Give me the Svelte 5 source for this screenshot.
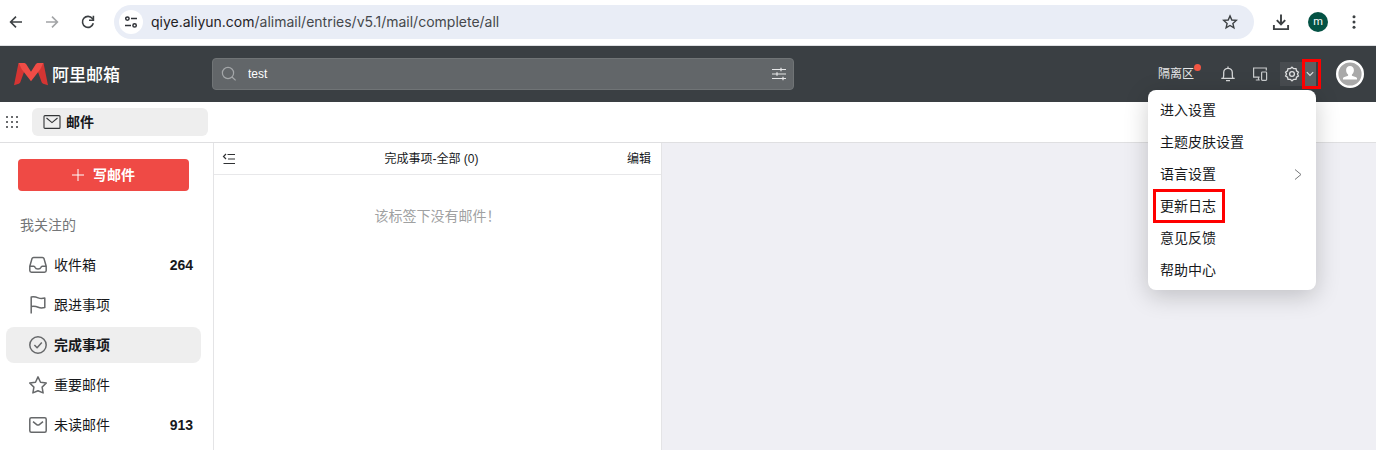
<script>
  let url = 'qiye.aliyun.com';
  let path = '/alimail/entries/v5.1/mail/complete/all';
  let query = 'test';
  let activeFolder = 'complete';
  let menuOpen = true;

  const folders = [
    { id: 'inbox', name: '收件箱', count: 264 },
    { id: 'follow', name: '跟进事项' },
    { id: 'complete', name: '完成事项' },
    { id: 'important', name: '重要邮件' },
    { id: 'unread', name: '未读邮件', count: 913 }
  ];

  const menu = [
    { name: '进入设置' },
    { name: '主题皮肤设置' },
    { name: '语言设置', more: true },
    { name: '更新日志', marked: true },
    { name: '意见反馈' },
    { name: '帮助中心' }
  ];
</script>

<div class="page">
  <div class="browser">
    <button class="nav-btn" aria-label="Back">
      <svg width="16" height="16" viewBox="0 0 16 16" fill="none" stroke="#3c4043" stroke-width="1.6"><path d="M14 8H3M8 2.6 2.6 8 8 13.4" /></svg>
    </button>
    <button class="nav-btn" aria-label="Forward" disabled>
      <svg width="16" height="16" viewBox="0 0 16 16" fill="none" stroke="#a2a4a6" stroke-width="1.6"><path d="M2 8h11M8 2.6 13.4 8 8 13.4" /></svg>
    </button>
    <button class="nav-btn" aria-label="Reload">
      <svg width="16" height="16" viewBox="0 0 16 16" fill="none" stroke="#3c4043" stroke-width="1.6"><path d="M13.3 9.300A5.500 5.500 0 1 1 12.400 4.600L13.600 5.800" /><path d="M13.400 1.800v4.400H9" /></svg>
    </button>
    <div class="address">
      <button class="site-info" aria-label="Site info">
        <svg width="14" height="14" viewBox="0 0 14 14" fill="none" stroke="#303338" stroke-width="1.5"><circle cx="3.4" cy="3.6" r="1.7" /><path d="M7 3.6h6M1 10.4h6" /><circle cx="10.6" cy="10.4" r="1.7" /></svg>
      </button>
      <span class="url">{url}<span class="path">{path}</span></span>
      <button class="nav-btn" aria-label="Bookmark">
        <svg width="16" height="16" viewBox="0 0 16 16" fill="none" stroke="#3c4043" stroke-width="1.4"><path d="m8 1.9 1.8 4.1 4.5.4-3.4 3 1 4.4L8 11.5l-3.9 2.3 1-4.4-3.4-3 4.500-.4z" /></svg>
      </button>
    </div>
    <button class="nav-btn" aria-label="Downloads">
      <svg width="18" height="18" viewBox="0 0 18 18" fill="none" stroke="#3c4043" stroke-width="1.9"><path d="M9 1.5v9.5M4.8 7.2 9 11.4l4.2-4.2M1.9 12v4.1h14.2V12" /></svg>
    </button>
    <button class="profile">m</button>
    <button class="nav-btn" aria-label="More">
      <svg width="16" height="16" viewBox="0 0 16 16" fill="#3c4043"><circle cx="8" cy="2.8" r="1.5" /><circle cx="8" cy="8" r="1.5" /><circle cx="8" cy="13.2" r="1.5" /></svg>
    </button>
  </div>

  <header>
    <a class="logo" href="/">
      <svg width="34" height="24" viewBox="0 0 34 24">
        <path fill="#d43533" d="M4.500 1 0 23.200l4.800-1.500c1.100-.4 1.600-1.200 1.900-2.400L10.200 9.500z" />
        <path fill="#d43533" d="M29.500 1 34 23.200l-4.800-1.500c-1.100-.4-1.600-1.200-1.900-2.400L23.800 9.500z" />
        <path fill="#f04c46" d="M4.500 1h5.300c1.100 0 2 .5 2.600 1.500L17 9.800l4.600-7.300c.6-1 1.500-1.500 2.600-1.500h5.300l-3.200 6.200L17 19.200 7.700 7.200z" />
      </svg>
      <span>阿里邮箱</span>
    </a>
    <div class="search">
      <svg width="16" height="16" viewBox="0 0 16 16" fill="none" stroke="#a4a7a9" stroke-width="1.2"><circle cx="7" cy="7" r="5.6" /><path d="m11 11 3.600 3.400" /></svg>
      <input type="text" aria-label="搜索" bind:value={query} />
      <button aria-label="高级搜索">
        <svg width="14" height="14" viewBox="0 0 14 14" fill="none" stroke="#e6e7e8" stroke-width="1.2"><path d="M0 2.5h14M0 7h14M0 11.500h14M9 .7v3.600M5 5.200v3.600M11 9.700v3.600" /></svg>
      </button>
    </div>
    <div class="tools">
      <a class="quarantine" href="/quarantine">隔离区<i class="dot"></i></a>
      <button class="bell" aria-label="通知">
        <svg width="16" height="16" viewBox="0 0 16 16" fill="none" stroke="#d4d6d7" stroke-width="1.3"><path d="M8 .6v1.700M1.300 12.400h13.400M3 12.400c.6-1 .7-2 .7-3.700V6.600a4.300 4.300 0 0 1 8.600 0v2.100c0 1.700.1 2.700.7 3.700M6 14.700h4" /></svg>
      </button>
      <button class="devices" aria-label="多端">
        <svg width="16" height="16" viewBox="0 0 16 16" fill="none" stroke="#c9cccd" stroke-width="1.200"><path d="M14.300 4.400V2H1.600v9.200h6M3.800 14h4M6.500 11.200V14" /><rect x="9.600" y="6" width="5" height="8.400" rx=".8" /></svg>
      </button>
      <div class="settings">
        <button class="gear" aria-label="设置">
          <svg width="16" height="16" viewBox="0 0 16 16" fill="none" stroke="#dfe0e1" stroke-width="1.300"><path d="m8 1.200 1.700 1.500 2.300-.1.500 2.200 1.900 1.300L13.500 8l.9 2-1.900 1.200-.5 2.200-2.300-.1L8 14.800l-1.700-1.500-2.300.1-.5-2.200L1.600 10l.9-2-.9-1.900 1.900-1.300.5-2.200 2.300.1z" /><circle cx="8" cy="8" r="2.400" /></svg>
        </button>
        <button class="caret" aria-label="更多设置" on:click={() => menuOpen = !menuOpen}>
          <svg width="8" height="6" viewBox="0 0 8 6" fill="none" stroke="#dfe0e1" stroke-width="1.100"><path d="m.8 1.200 3.200 3.200 3.200-3.200" /></svg>
        </button>
        {#if menuOpen}
          <ul class="menu">
            {#each menu as item}
              <li>
                <button>
                  <span class:marked={item.marked}>{item.name}</span>
                  {#if item.more}
                    <svg width="8" height="12" viewBox="0 0 8 12" fill="none" stroke="#77797b"><path d="m1 1.500 6 5-6 5" /></svg>
                  {/if}
                </button>
              </li>
            {/each}
          </ul>
        {/if}
      </div>
      <button class="avatar" aria-label="账号">
        <svg width="28" height="28" viewBox="0 0 28 28"><circle cx="14" cy="14" r="12.800" fill="#a9a9a9" stroke="#fff" stroke-width="2.400" /><path fill="#fff" d="M14 6c2.500 0 3.900 1.800 3.900 4.200 0 1.900-.8 3.300-2 4.200v1.300c1.700.6 4.400 1.100 5.100 2.300v1.500H7V18c.7-1.200 3.400-1.700 5.100-2.300v-1.300c-1.200-.9-2-2.300-2-4.200C10.100 7.800 11.500 6 14 6z" /></svg>
      </button>
    </div>
  </header>

  <nav class="tabs">
    <button class="apps" aria-label="应用">
      <svg width="14" height="14" viewBox="0 0 14 14" fill="#6a6c6e">
        {#each [0, 1, 2] as row}
          {#each [0, 1, 2] as col}
            <rect x={col * 5 + 1} y={row * 5 + 1} width="2" height="2" />
          {/each}
        {/each}
      </svg>
    </button>
    <button class="tab">
      <svg width="18" height="14" viewBox="0 0 18 14" fill="none" stroke="#333537" stroke-width="1.100"><rect x="1" y=".6" width="16" height="12.800" rx="1" /><path d="m3.500 3 5.500 4.600L14.500 3" /></svg>
      邮件
    </button>
  </nav>

  <main>
    <aside>
      <button class="compose">
        <svg width="12" height="12" viewBox="0 0 12 12" stroke="#fff" stroke-width="1"><path d="M6 0v12M0 6h12" /></svg>
        写邮件
      </button>
      <h2>我关注的</h2>
      <ul class="folders">
        {#each folders as folder}
          <li>
            <button class:active={activeFolder === folder.id} on:click={() => activeFolder = folder.id}>
              <svg width="18" height="18" viewBox="0 0 18 18" fill="none" stroke="#66686a" stroke-width="1.500" stroke-linejoin="round">
                {#if folder.id === 'inbox'}
                  <path d="M.8 10.200 3 2.600Q3.400 1.400 4.600 1.400h8.800q1.200 0 1.600 1.200l2.200 7.600v4.400q0 1.700-1.700 1.700H2.500Q.8 16.300.8 14.600zh4q.9 0 1.200 1 .6 1.700 3 1.700t3-1.700q.3-1 1.200-1h4" />
                {:else if folder.id === 'follow'}
                  <path d="M2.200 17.600V1c2.500-.5 4.600-.1 7 .9 2.200.9 4.200.8 6.600.2v9.400c-2.400.6-4.400.7-6.600-.2-2.400-1-4.500-1.200-7-.7" />
                {:else if folder.id === 'complete'}
                  <circle cx="9" cy="9" r="8.200" /><path d="m5.400 9 2.700 2.800 4.700-5.200" />
                {:else if folder.id === 'important'}
                  <path d="m9 .9 2.500 5.300 5.800.8-4.200 4.100 1 5.800L9 14.700l-5.100 2.200 1-5.800L.7 7l5.800-.8z" />
                {:else}
                  <rect x=".8" y="1.800" width="16.400" height="14.400" rx="1.500" /><path d="m4 5.700 4 3.100q1 .6 2 0l4-3.100" />
                {/if}
              </svg>
              <span>{folder.name}</span>
              {#if folder.count}<strong>{folder.count}</strong>{/if}
            </button>
          </li>
        {/each}
      </ul>
    </aside>

    <section class="list">
      <div class="list-head">
        <button aria-label="收起">
          <svg width="14" height="12" viewBox="0 0 14 12" fill="none" stroke="#303234" stroke-width="1.200"><path d="M5.500 1.500H13M6 6h7M1.500 10.500H13M4 1 1.500 3.500 4 6" /></svg>
        </button>
        <h1>完成事项-全部 (0)</h1>
        <button>编辑</button>
      </div>
      <p class="empty">该标签下没有邮件！</p>
    </section>
    <section class="detail"></section>
  </main>
</div>

<style>
  :global(body) {
    font-family: "Liberation Sans", "Noto Sans CJK SC", sans-serif;
    font-size: 14px;
    line-height: 20px;
    color: #17191c;
  }
  .page {
    display: flex;
    flex-direction: column;
    height: 100vh;
    overflow: hidden;
  }
  button {
    display: flex;
    align-items: center;
    padding: 0;
    border: none;
    background: none;
    color: inherit;
    font: inherit;
    cursor: pointer;
  }
  svg {
    display: block;
    flex-shrink: 0;
  }
  ul {
    list-style: none;
    margin: 0;
    padding: 0;
  }
  .browser {
    display: flex;
    align-items: center;
    gap: 20px;
    box-sizing: border-box;
    height: 46px;
    padding: 0 14px 2px 8px;
    flex-shrink: 0;
    background: #fff;
    border-bottom: 1px solid #dfe1e4;
  }
  .address {
    display: flex;
    align-items: center;
    flex: 1;
    gap: 8px;
    height: 34px;
    margin: 0 -2px;
    padding: 0 16px 0 5px;
    box-sizing: border-box;
    border-radius: 17px;
    background: #e9edf6;
  }
  .site-info {
    justify-content: center;
    width: 24px;
    height: 24px;
    border-radius: 50%;
    background: #fff;
  }
  .url {
    flex: 1;
    font-family: Inter, sans-serif;
    font-size: 14px;
    color: #1f2124;
  }
  .path {
    color: #45484c;
  }
  .profile {
    justify-content: center;
    width: 20px;
    height: 20px;
    margin: 0 -2px;
    border-radius: 50%;
    background: #045244;
    color: #fff;
    font-family: Roboto, sans-serif;
    font-size: 11px;
  }
  header {
    display: flex;
    align-items: center;
    height: 56px;
    padding: 0 12px 0 14px;
    flex-shrink: 0;
    background: #3a3f43;
  }
  .logo {
    display: flex;
    align-items: center;
    gap: 4px;
    width: 198px;
    color: #fff;
    font-family: "Noto Sans CJK SC", sans-serif;
    font-size: 17px;
    font-weight: 500;
    text-decoration: none;
  }
  .search {
    display: flex;
    align-items: center;
    flex: 0 1 582px;
    gap: 11px;
    box-sizing: border-box;
    height: 32px;
    padding: 0 7px 0 8px;
    border: 1px solid #707476;
    border-radius: 4px;
    background: #626669;
  }
  .search input {
    flex: 1;
    min-width: 0;
    padding: 0;
    border: none;
    outline: none;
    background: none;
    color: #fff;
    font: inherit;
    font-size: 12px;
  }
  .tools {
    display: flex;
    align-items: center;
    margin-left: auto;
  }
  .quarantine {
    position: relative;
    color: #e6e7e8;
    font-size: 12px;
    text-decoration: none;
  }
  .dot {
    position: absolute;
    top: 0;
    right: -7px;
    width: 7px;
    height: 7px;
    border-radius: 50%;
    background: #f25643;
  }
  .bell {
    margin-left: 26px;
  }
  .devices {
    margin: 0 12px 0 16px;
  }
  .settings {
    position: relative;
    display: flex;
    height: 24px;
    margin-right: 20px;
    background: #484c50;
  }
  .gear {
    width: 24px;
    justify-content: center;
  }
  .caret {
    position: relative;
    justify-content: center;
    width: 12px;
    background: #5c6063;
  }
  .caret::after {
    content: '';
    position: absolute;
    inset: -3px -5px -3px -2px;
    border: 3px solid #f00;
  }
  .menu {
    position: absolute;
    top: 28px;
    right: 0;
    z-index: 10;
    width: 168px;
    padding: 4px 0;
    border-radius: 8px;
    background: #fff;
    box-shadow: 0 6px 24px rgba(0, 0, 0, 0.2);
  }
  .menu button {
    justify-content: space-between;
    box-sizing: border-box;
    width: 100%;
    height: 32px;
    padding: 0 14px 0 12px;
  }
  .marked {
    position: relative;
  }
  .marked::after {
    content: '';
    position: absolute;
    inset: -7px -9px -7px -7px;
    border: 3px solid #f00;
  }
  .avatar {
    border-radius: 50%;
  }
  .tabs {
    display: flex;
    align-items: center;
    gap: 13px;
    height: 40px;
    padding: 0 5px;
    flex-shrink: 0;
    background: #fff;
    border-bottom: 1px solid #dfdfe1;
  }
  .tab {
    gap: 5px;
    width: 176px;
    height: 28px;
    padding: 0 11px;
    box-sizing: border-box;
    border-radius: 6px;
    background: #eee;
    font-weight: 700;
  }
  main {
    display: flex;
    flex: 1;
    min-height: 0;
  }
  aside {
    box-sizing: border-box;
    width: 214px;
    padding-top: 16px;
    flex-shrink: 0;
    border-right: 1px solid #e4e4e6;
  }
  .compose {
    justify-content: center;
    gap: 9px;
    width: 171px;
    height: 32px;
    margin-left: 18px;
    border-radius: 4px;
    background: #ef4a45;
    color: #fff;
    font-weight: 700;
  }
  h2 {
    margin: 24px 0 12px 20px;
    font-size: 14px;
    font-weight: 400;
    color: #747678;
  }
  .folders {
    display: flex;
    flex-direction: column;
    gap: 4px;
    padding: 0 12px 0 6px;
  }
  .folders button {
    gap: 7px;
    box-sizing: border-box;
    width: 100%;
    height: 36px;
    padding: 0 8px 0 23px;
    border-radius: 8px;
  }
  .folders .active {
    background: #eee;
    font-weight: 700;
  }
  .folders strong {
    margin-left: auto;
  }
  .list {
    box-sizing: border-box;
    flex: 0 1 448px;
    border-right: 1px solid #e4e4e6;
    background: #fff;
  }
  .list-head {
    display: flex;
    align-items: center;
    justify-content: space-between;
    height: 31px;
    padding: 0 10px 0 8px;
    border-bottom: 1px solid #e8e8ea;
    font-size: 12px;
  }
  h1 {
    margin: 0;
    font-size: 12px;
    font-weight: 400;
  }
  .empty {
    margin: 31px 0 0;
    text-align: center;
    color: #a0a1a2;
  }
  .detail {
    flex: 1;
    background: #efeff4;
  }
</style>
